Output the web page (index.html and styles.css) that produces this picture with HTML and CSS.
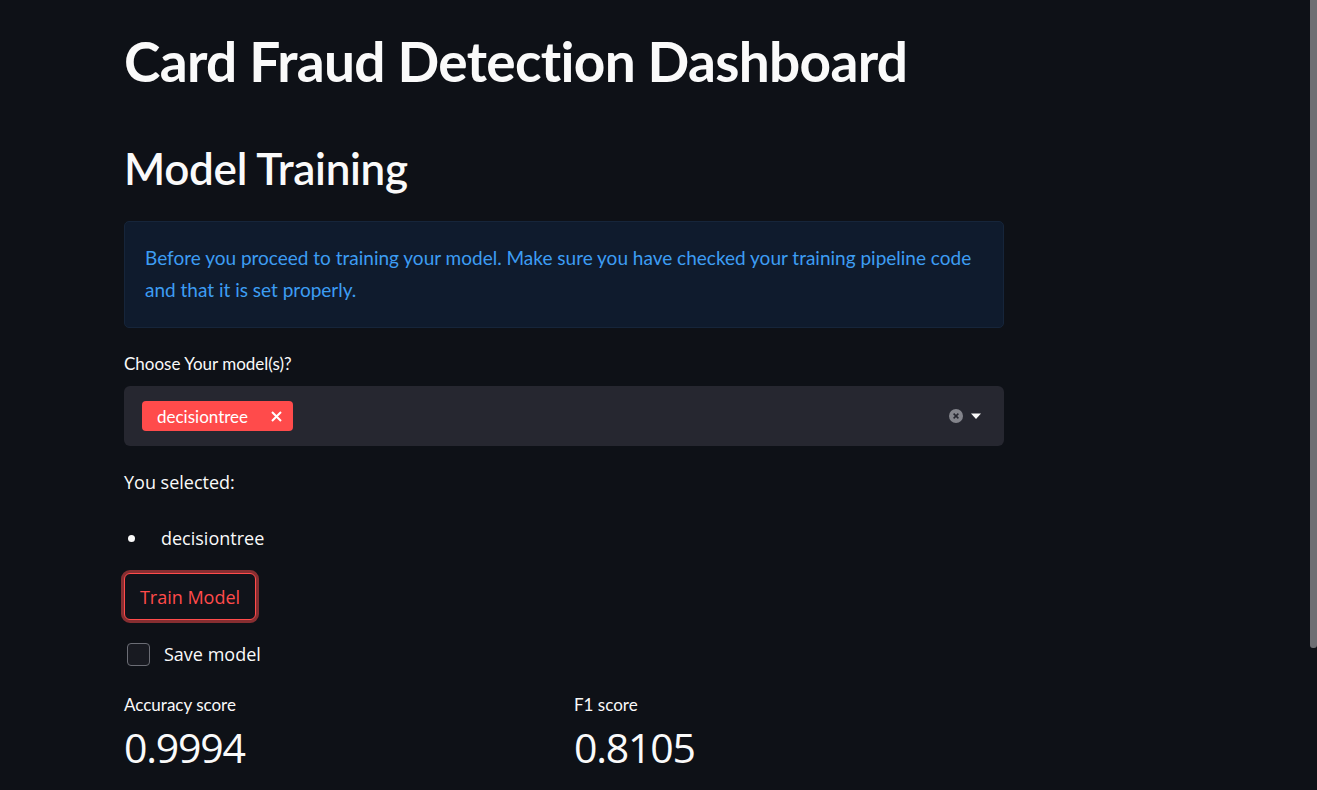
FILE: index.html
```html
<!DOCTYPE html>
<html lang="en">
<head>
<meta charset="utf-8">
<title>Card Fraud Detection Dashboard</title>
<link rel="stylesheet" href="styles.css">
</head>
<body>
<main class="main">
  <h1 class="title">Card Fraud Detection Dashboard</h1>
  <h2 class="subtitle">Model Training</h2>
  <div class="info">Before you proceed to training your model. Make sure you have checked your training pipeline code and that it is set properly.</div>
  <label class="field-label">Choose Your model(s)?</label>
  <div class="select">
    <span class="tag"><span class="tag-text">decisiontree</span><svg class="tag-x" width="11" height="11" viewBox="0 0 11 11"><path d="M1 1 L10 10 M10 1 L1 10" stroke="#ffffff" stroke-width="2"/></svg></span>
    <span class="select-icons">
      <svg class="clear-icon" width="14" height="14" viewBox="0 0 14 14"><circle cx="7" cy="7" r="7" fill="#83848b"/><path d="M4.6 4.6 L9.4 9.4 M9.4 4.6 L4.6 9.4" stroke="#262730" stroke-width="1.5"/></svg>
      <svg class="caret-icon" width="12" height="8" viewBox="0 0 12 8"><path d="M1 1.5 L11 1.5 L6 7 Z" fill="#fafafa"/></svg>
    </span>
  </div>
  <p class="md">You selected:</p>
  <ul class="list"><li>decisiontree</li></ul>
  <button class="btn">Train Model</button>
  <label class="check"><span class="box"></span><span class="check-text">Save model</span></label>
  <div class="metrics">
    <div class="metric"><div class="metric-label">Accuracy score</div><div class="metric-value">0.9994</div></div>
    <div class="metric"><div class="metric-label">F1 score</div><div class="metric-value">0.8105</div></div>
  </div>
</main>
<div class="scroll-thumb"></div>
</body>
</html>
```

FILE: styles.css
```css
html, body {
  margin: 0;
  padding: 0;
  height: 100%;
  overflow: hidden;
  background: #0e1117;
  color: #fafafa;
}
body {
  font-family: "Lato", "Liberation Sans", sans-serif;
}
.main {
  width: 880px;
  padding-left: 124px;
  display: flex;
  flex-direction: column;
  align-items: flex-start;
}
.title {
  margin: 28px 0 0 0;
  font-size: 55px;
  line-height: 66px;
  font-weight: 700;
  letter-spacing: -0.7px;
}
.subtitle {
  margin: 47px 0 0 0;
  font-size: 44px;
  line-height: 54px;
  font-weight: 600;
  letter-spacing: -0.3px;
}
.info {
  margin-top: 26px;
  box-sizing: border-box;
  width: 880px;
  padding: 20px 20px 21px 20px;
  background: #0f1b2d;
  border: 1px solid #16253a;
  border-radius: 5px;
  color: #3d9df3;
  font-size: 19px;
  line-height: 32px;
}
.field-label {
  margin-top: 25px;
  font-size: 17px;
  line-height: 22px;
}
.select {
  margin-top: 11px;
  box-sizing: border-box;
  width: 880px;
  height: 60px;
  background: #262730;
  border-radius: 6px;
  display: flex;
  align-items: center;
  justify-content: space-between;
  padding: 0 22px 0 18px;
}
.tag {
  height: 30px;
  box-sizing: border-box;
  background: #ff4b4b;
  border-radius: 4px;
  display: flex;
  align-items: center;
  padding: 0 11px 0 15px;
  font-size: 17px;
  color: #ffffff;
}
.tag-x {
  margin-left: 23px;
}
.select-icons {
  display: flex;
  align-items: center;
  gap: 7px;
}
.md {
  margin: 22px 0 0 0;
  font-family: "Open Sans", "Noto Sans", sans-serif;
  font-size: 18px;
  line-height: 28px;
}
.list {
  margin: 28px 0 0 0;
  padding: 0;
  list-style: none;
  font-family: "Open Sans", "Noto Sans", sans-serif;
  font-size: 18px;
  line-height: 28px;
}
.list li {
  display: flex;
  align-items: center;
}
.list li::before {
  content: "";
  width: 7px;
  height: 7px;
  border-radius: 50%;
  background: #fafafa;
  margin: 0 26px 0 4px;
}
.btn {
  margin-top: 21px;
  margin-left: 0;
  width: 132px;
  height: 47px;
  box-sizing: border-box;
  background: #10131a;
  border: 1px solid #ff4b4b;
  border-radius: 6px;
  box-shadow: 0 0 0 3px rgba(255, 75, 75, 0.5);
  color: #ff4b4b;
  font-family: "Open Sans", "Noto Sans", sans-serif;
  font-size: 18px;
  padding: 0;
}
.check {
  margin-top: 22px;
  display: flex;
  align-items: center;
  gap: 14px;
  padding-left: 3px;
}
.box {
  width: 21px;
  height: 21px;
  border: 1.5px solid #6b6d75;
  border-radius: 4px;
  background: #181a21;
}
.check-text {
  font-family: "Open Sans", "Noto Sans", sans-serif;
  font-size: 18px;
  line-height: 24px;
}
.metrics {
  margin-top: 28px;
  width: 880px;
  display: grid;
  grid-template-columns: 1fr 1fr;
  gap: 20px;
}
.metric-label {
  font-size: 17px;
  line-height: 22px;
}
.metric-value {
  margin-top: 6px;
  font-family: "Open Sans", "Noto Sans", sans-serif;
  font-size: 41px;
  line-height: 50px;
  letter-spacing: -1.2px;
}
.scroll-thumb {
  position: fixed;
  top: 0;
  right: 0;
  width: 7px;
  height: 648px;
  background: #6e6e73;
  border-radius: 0 0 3px 3px;
}
```
